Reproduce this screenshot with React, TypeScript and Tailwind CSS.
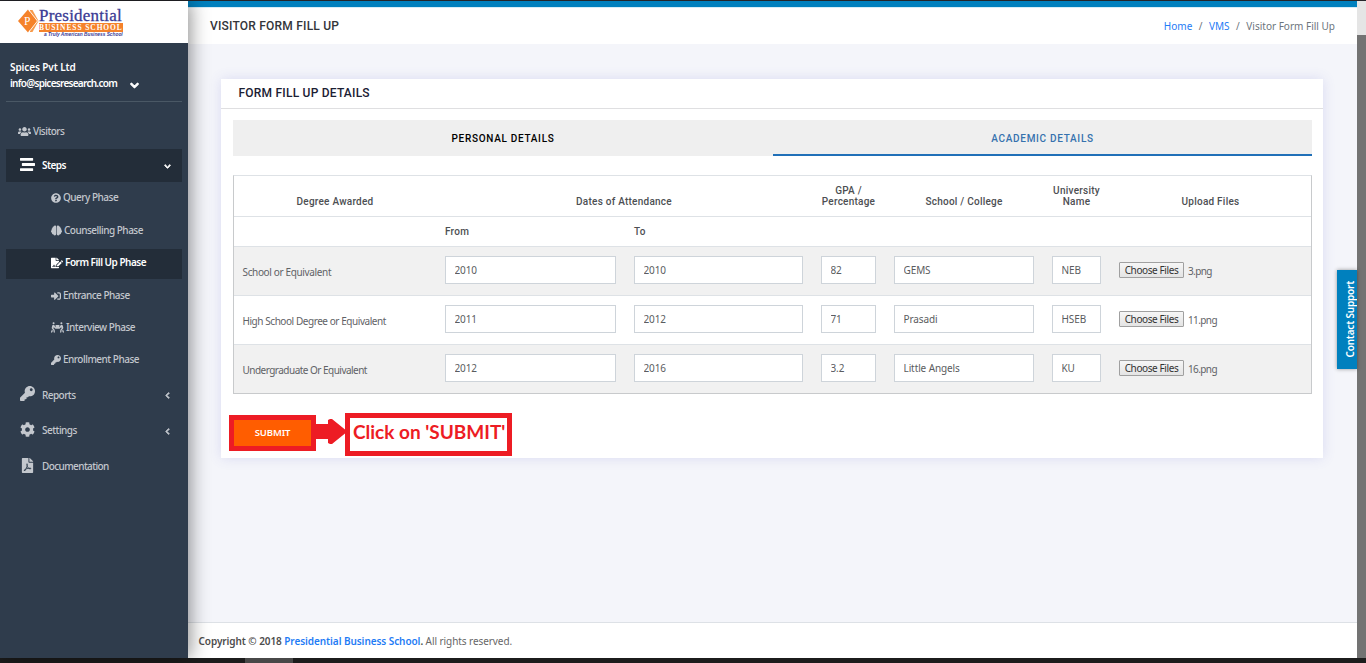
import type { ReactNode } from "react";
import {
    FaBrain,
    FaChevronDown,
    FaChevronLeft,
    FaCog,
    FaFilePdf,
    FaFileSignature,
    FaKey,
    FaPeopleCarry,
    FaQuestionCircle,
    FaSignInAlt,
    FaStream,
    FaUsers,
} from "react-icons/fa";

type Row = {
    degree: string;
    tracking: string;
    from: string;
    to: string;
    gpa: string;
    school: string;
    university: string;
    file: string;
}

const rows: Row[] = [
    { degree: "School or Equivalent", tracking: "tracking-[-0.35px]", from: "2010", to: "2010", gpa: "82", school: "GEMS", university: "NEB", file: "3.png" },
    { degree: "High School Degree or Equivalent", tracking: "tracking-[-0.44px]", from: "2011", to: "2012", gpa: "71", school: "Prasadi", university: "HSEB", file: "11.png" },
    { degree: "Undergraduate Or Equivalent", tracking: "tracking-[-0.52px]", from: "2012", to: "2016", gpa: "3.2", school: "Little Angels", university: "KU", file: "16.png" },
];

const columns = "grid grid-cols-[202px_189px_187px_73px_158px_67px_201px]";

function Logo() {
    return (
        <div className="flex h-[42px] shrink-0 bg-white pl-[18px] pt-[7px]">
            <svg className="mt-px shrink-0" width="21" height="24" viewBox="0 0 21 24">
                <path d="M12 1H14.5L20.5 12L14.5 23H12Z" fill="#f79a4a" />
                <path d="M10 0.5L19 12L10 23.5L0 12Z" fill="#f5822a" />
                <path d="M10.5 0.5L19.5 12L10.5 23.5" fill="none" stroke="#fff" strokeWidth="0.9" />
                <text x="9.3" y="15.5" textAnchor="middle" fontSize="11.5" fill="#fff" fontFamily="Liberation Serif, serif">P</text>
            </svg>
            <div className="w-[84px] shrink-0 font-['Liberation_Serif',serif]">
                <p className="h-[15px] text-[17px] leading-[15px] tracking-[0.22px] whitespace-nowrap text-[#3b3b94] [-webkit-text-stroke:0.3px_#3b3b94]">Presidential</p>
                <p className="h-[9px] bg-[#f5822a] text-[7.5px] leading-[9px] font-bold tracking-[0.9px] whitespace-nowrap text-white">BUSINESS SCHOOL</p>
                <p className="h-[5px] overflow-hidden pl-[5px] font-['Liberation_Sans',sans-serif] text-[4.8px] leading-[5px] font-bold italic whitespace-nowrap text-[#3b3b94]">a Truly American Business School</p>
            </div>
        </div>
    )
}

function SubItem({ icon, label, className }: { icon: ReactNode; label: string; className: string }) {
    return (
        <a className={`flex items-center gap-[2px] pl-[45px] text-[10px] tracking-[-0.5px] whitespace-nowrap ${className}`}>
            {icon}
            <span>{label}</span>
        </a>
    )
}

function Sidebar() {
    return (
        <aside className="z-10 flex w-[188px] shrink-0 flex-col bg-[#2f3c4c] font-['Noto_Sans',sans-serif] font-medium text-[#c3c7cd] shadow-[2px_0_18px_rgba(0,0,0,0.45)]">
            <Logo />
            <div className="mx-[6px] flex h-[59px] flex-col border-b border-[#4a5865] pl-[4px] pt-[17px] text-[10px] text-white">
                <p className="h-[15px] leading-[15px] font-semibold tracking-[-0.1px]">Spices Pvt Ltd</p>
                <div className="flex h-[16px] items-center">
                    <p className="w-[120px] font-semibold tracking-[-0.72px] whitespace-nowrap">info@spicesresearch.com</p>
                    <FaChevronDown className="mt-[4px] size-[9px] stroke-[60]" />
                </div>
            </div>
            <nav className="mx-[6px] flex flex-col">
                <a className="mt-[14px] flex h-[30px] items-center gap-[2px] pl-[12px] text-[10px] tracking-[-0.5px]">
                    <FaUsers className="size-[13px]" />
                    <span>Visitors</span>
                </a>
                <a className="mt-[3px] flex h-[33px] items-center bg-[#232d39] pr-[11px] pl-[14px] text-[10px] font-semibold tracking-[-0.55px] text-white">
                    <FaStream className="mb-[3px] size-[15px]" />
                    <span className="ml-[7px] flex-1">Steps</span>
                    <FaChevronDown className="mt-[2px] size-[7px] stroke-[60]" />
                </a>
                <SubItem className="h-[31px]" icon={<FaQuestionCircle className="size-[10px]" />} label="Query Phase" />
                <SubItem className="mt-[1px] h-[32px]" icon={<FaBrain className="size-[11px]" />} label="Counselling Phase" />
                <SubItem className="mt-[3px] h-[30px] bg-[#232d39] pb-[3px] font-semibold text-white" icon={<FaFileSignature className="size-[12px]" />} label="Form Fill Up Phase" />
                <SubItem className="h-[33px]" icon={<FaSignInAlt className="size-[10px]" />} label="Entrance Phase" />
                <SubItem className="h-[31px]" icon={<FaPeopleCarry className="size-[13px]" />} label="Interview Phase" />
                <SubItem className="h-[33px]" icon={<FaKey className="size-[10px]" />} label="Enrollment Phase" />
                <a className="mt-[2px] flex h-[34px] items-center pr-[11px] pl-[14px] text-[10px] tracking-[-0.55px]">
                    <FaKey className="mb-[3px] size-[15px]" />
                    <span className="ml-[7px] flex-1">Reports</span>
                    <FaChevronLeft className="mt-[1px] size-[7px] stroke-[50]" />
                </a>
                <a className="mt-[1px] flex h-[35px] items-center pr-[11px] pl-[14px] text-[10px] tracking-[-0.5px]">
                    <FaCog className="mb-[3px] size-[15px]" />
                    <span className="ml-[7px] flex-1">Settings</span>
                    <FaChevronLeft className="mt-[1px] size-[7px] stroke-[50]" />
                </a>
                <a className="mt-[1px] flex h-[35px] items-center pl-[14px] text-[10px] tracking-[-0.6px]">
                    <FaFilePdf className="mb-[3px] size-[15px]" />
                    <span className="ml-[7px]">Documentation</span>
                </a>
            </nav>
        </aside>
    )
}

function Field({ value }: { value: string }) {
    return (
        <div className="px-[9px] pt-[9px]">
            <input className="block h-[28px] w-full border border-[#ced4da] bg-white px-[8.5px] text-[10px] tracking-[-0.1px] text-[#5a5c60] outline-none" defaultValue={value} />
        </div>
    )
}

function AcademicTable() {
    return (
        <div className="mt-[19px] border border-[#c8cacc] border-t-[#dee2e6] text-[10px] text-[#5f6266]">
            <div className={`${columns} h-[41px] items-end border-b border-[#dee2e6] pb-[9px] text-center font-[Roboto,sans-serif] leading-[11px] font-medium tracking-[0.24px] text-[#4d4f53]`}>
                <p>Degree Awarded</p>
                <p className="col-span-2">Dates of Attendance</p>
                <p>GPA /<br />Percentage</p>
                <p>School / College</p>
                <p>University<br />Name</p>
                <p>Upload Files</p>
            </div>
            <div className={`${columns} h-[30px] border-b border-[#dee2e6] font-[Roboto,sans-serif] leading-[29px] font-medium tracking-[0.24px] text-[#4d4f53]`}>
                <p></p>
                <p className="pl-[9px]">From</p>
                <p className="pl-[9px]">To</p>
            </div>
            {rows.map((row) => (
                <div key={row.degree} className={`${columns} h-[49px] border-b border-[#dee2e6] odd:bg-[#f1f1f1] last:h-[48px] last:border-b-0`}>
                    <p className={`pl-[8.5px] leading-[50px] whitespace-nowrap ${row.tracking}`}>{row.degree}</p>
                    <Field value={row.from} />
                    <Field value={row.to} />
                    <Field value={row.gpa} />
                    <Field value={row.school} />
                    <Field value={row.university} />
                    <div className="flex items-start gap-[4px] pt-[15px] pl-[9px] leading-[16px]">
                        <button className="h-[16px] w-[65px] rounded-[1px] border border-[#a0a0a0] bg-gradient-to-b from-[#f6f6f6] to-[#e4e4e4] text-[10px] leading-[14px] tracking-[-0.4px] whitespace-nowrap text-[#333]">Choose Files</button>
                        <span className="pt-px tracking-[-0.6px]">{row.file}</span>
                    </div>
                </div>
            ))}
        </div>
    )
}

export default function App() {
    return (
        <div className="flex h-[663px] w-[1366px] flex-col overflow-hidden bg-[#1c1c1c] font-['Noto_Sans',sans-serif]">
            <div className="h-px shrink-0 bg-[#25252a]" />
            <div className="flex h-[657px] shrink-0">
                <Sidebar />
                <main className="relative flex w-[1169px] flex-col bg-[#f4f5fa]">
                    <div className="h-[6px] shrink-0 bg-[#0080be]" />
                    <header className="flex h-[37px] shrink-0 items-center justify-between border-t border-[#d5edf8] bg-white pr-[22px] pl-[22px]">
                        <h1 className="font-[Roboto,sans-serif] text-[12px] font-medium tracking-[0.21px] text-[#33353a]">VISITOR FORM FILL UP</h1>
                        <p className="flex gap-[6.5px] text-[10px] text-[#6c757d]">
                            <a className="text-[#1f7cf5]">Home</a>
                            <span>/</span>
                            <a className="text-[#1f7cf5]">VMS</a>
                            <span>/</span>
                            <span>Visitor Form Fill Up</span>
                        </p>
                    </header>

                    <section className="mt-[35px] ml-[33px] h-[379px] w-[1102px] shrink-0 bg-white shadow-[0_0_12px_rgba(90,90,200,0.16)]">
                        <h2 className="h-[30px] border-b border-[#dfdfe1] pl-[17.5px] font-[Roboto,sans-serif] text-[12px] leading-[28px] font-medium tracking-[0.22px] text-[#1b2033]">FORM FILL UP DETAILS</h2>
                        <div className="pt-[11px] pr-[11px] pl-[12px]">
                            <div className="grid h-[36px] grid-cols-[540px_539px] bg-[#efefef] text-center font-[Roboto,sans-serif] text-[10px] leading-[37px] font-medium tracking-[0.7px]">
                                <p className="text-black">PERSONAL DETAILS</p>
                                <p className="h-[36px] border-b-2 border-[#2070b8] text-[#3672ae]">ACADEMIC DETAILS</p>
                            </div>
                            <AcademicTable />
                            <div className="mt-[19px] -ml-[4px] flex h-[43px] items-center">
                                <button className="mb-[3px] h-[36px] w-[87px] border-[5px] border-[#ed1c24] bg-[#ff5d00] text-[9.5px] leading-[24px] font-semibold tracking-[-0.1px] text-white">SUBMIT</button>
                                <svg className="mb-[6px] shrink-0" width="29" height="26" viewBox="0 0 29 26">
                                    <path d="M0 5H12V1L14 0H16L29 10.5V14.5L16 25H14L12 24V20H0Z" fill="#ed1c24" />
                                </svg>
                                <p className="h-[43px] w-[167px] border-[5px] border-[#ed1c24] pl-[3px] font-[Lato,sans-serif] text-[19px] leading-[28px] font-bold whitespace-nowrap text-[#ed1c24]">Click on 'SUBMIT'</p>
                            </div>
                        </div>
                    </section>

                    <footer className="mt-auto h-[36px] shrink-0 border-t border-[#dde1e6] bg-white pl-[10.5px] text-[10px] leading-[37px] tracking-[-0.07px] text-[#666]">
                        <span className="font-semibold text-[#4c4c4c]">Copyright © 2018 <a className="text-[#1f7cf5]">Presidential Business School</a>.</span> All rights reserved.
                    </footer>

                    <div className="absolute top-[269px] right-0 flex h-[99px] w-[20px] items-center justify-center bg-[#0080be] pl-[6px] shadow-[0_0_4px_rgba(0,0,0,0.4)]">
                        <span className="rotate-180 text-[10px] leading-[14px] font-semibold tracking-[-0.2px] whitespace-nowrap text-white [writing-mode:vertical-rl]">Contact Support</span>
                    </div>
                </main>
                <div className="w-[9px] bg-[#737373]">
                    <div className="h-[34px] bg-[#e5e5e5]" />
                </div>
            </div>
            <div className="ml-[245px] h-[5px] w-[48px] bg-[#484848]" />
        </div>
    )
}
